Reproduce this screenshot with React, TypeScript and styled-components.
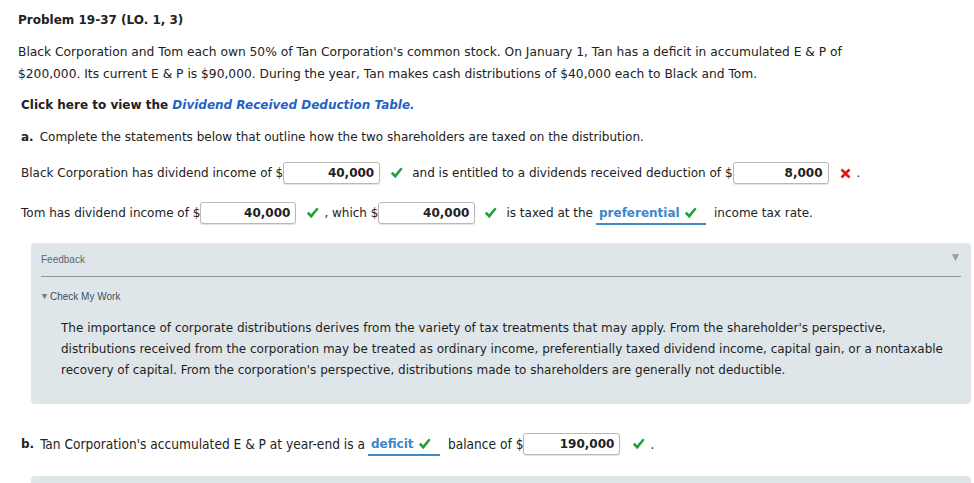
import styled, { createGlobalStyle } from "styled-components";

const GlobalStyle = createGlobalStyle`
  body {
    margin: 0;
    background: #ffffff;
    font-family: "DejaVu Sans", Verdana, sans-serif;
    color: #222222;
  }
`;

const Page = styled.div`
  padding: 11px 3px 0 18px;
  font-size: 12px;
  overflow: hidden;
  height: 483px;
  box-sizing: border-box;
`;

const Title = styled.div`
  font-weight: bold;
  font-size: 12px;
  line-height: 18px;
  margin-bottom: 12px;
`;

const Para = styled.p`
  margin: 0 0 10px 0;
  max-width: 860px;
  font-size: 12.25px;
  line-height: 22px;
`;

const ClickLine = styled.div`
  font-weight: bold;
  padding-left: 3px;
  line-height: 20px;
  margin-bottom: 10px;
`;

const Link = styled.span`
  color: #1f63c6;
  font-style: italic;
`;

const Row = styled.div<{ $mt?: number }>`
  display: flex;
  align-items: center;
  padding-left: 3px;
  height: 24px;
  margin-top: ${(p) => p.$mt ?? 0}px;
  white-space: nowrap;
`;

const Lead = styled.b<{ $gap?: number }>`
  font-family: "DejaVu Sans", Verdana, sans-serif;
  font-size: 12px;
  margin-right: ${(p) => p.$gap ?? 6}px;
`;

const Input = styled.div<{ $w: number }>`
  width: ${(p) => p.$w}px;
  height: 22px;
  box-sizing: border-box;
  border: 1px solid #b9b9b9;
  border-radius: 3px;
  box-shadow: 0 1px 1px rgba(0, 0, 0, 0.12);
  background: #fff;
  font-family: "DejaVu Sans", Verdana, sans-serif;
  font-size: 12px;
  font-weight: bold;
  text-align: right;
  padding-right: 5px;
  line-height: 20px;
`;

const Mark = styled.span<{ $l?: number; $r?: number }>`
  display: inline-flex;
  align-items: center;
  margin-left: ${(p) => p.$l ?? 10}px;
  margin-right: ${(p) => p.$r ?? 8}px;
`;

const Choice = styled.span<{ $w: number }>`
  display: inline-flex;
  align-items: center;
  width: ${(p) => p.$w}px;
  height: 22px;
  box-sizing: border-box;
  border-bottom: 2px solid #3f8ac9;
  color: #3c87c8;
  font-family: "DejaVu Sans", Verdana, sans-serif;
  font-size: 12px;
  font-weight: bold;
  padding-left: 3px;
  margin: 0 8px 0 3px;
  position: relative;
  top: 1px;
`;

const Panel = styled.div`
  margin: 18px 0 0 13px;
  background: #dfe6e9;
  border-radius: 4px;
  padding: 9px 10px 23px 10px;
`;

const PanelHead = styled.div`
  display: flex;
  justify-content: space-between;
  align-items: center;
  font-family: "Liberation Sans", Arial, sans-serif;
  font-size: 10px;
  color: #566a78;
  height: 14px;
  padding-bottom: 10px;
  border-bottom: 1px solid #8d979c;
`;

const Caret = styled.svg<{ $mr?: number; $mt?: number }>`
  flex: none;
  margin-right: ${(p) => p.$mr ?? 0}px;
  margin-top: ${(p) => p.$mt ?? 0}px;
`;

const SubHead = styled.div`
  font-family: "Liberation Sans", Arial, sans-serif;
  font-size: 10px;
  color: #3e4f5a;
  margin-top: 14px;
  display: flex;
  align-items: center;
  gap: 2px;
`;

const FeedbackText = styled.p`
  margin: 16px 0 0 20px;
  line-height: 21px;
  color: #1e1e1e;
`;

const CondensedRow = styled(Row)`
  font-family: "DejaVu Sans Condensed", "Liberation Sans Narrow", "Liberation Sans", sans-serif;
  font-size: 13.6px;
`;

const Bottom = styled.div`
  margin: 20px 0 0 13px;
  background: #dfe6e9;
  border-radius: 4px 4px 0 0;
  height: 20px;
`;

const Check = () => (
  <svg width="13" height="12" viewBox="0 0 13 12">
    <path d="M0.8 6.6 L2.9 4.7 L5 7.2 L10.9 0.6 L12.6 2 L5.3 11.2 Z" fill="#1f9e3a" />
  </svg>
);

const Cross = () => (
  <svg width="11" height="11" viewBox="0 0 11 11">
    <path d="M1.5 1.5 L9.5 9.5 M9.5 1.5 L1.5 9.5" fill="none" stroke="#e4141b" strokeWidth="2.6" />
  </svg>
);

const Tri = ({ size, color, mr, mt }: { size: number; color: string; mr?: number; mt?: number }) => (
  <Caret width={size} height={size} viewBox="0 0 10 10" $mr={mr} $mt={mt}>
    <path d="M1 1.5 H9 L5 9 Z" fill={color} />
  </Caret>
);

export default function App() {
  return (
    <>
      <GlobalStyle />
      <Page>
        <Title>Problem 19-37 (LO. 1, 3)</Title>
        <Para>
          Black Corporation and Tom each own 50% of Tan Corporation's common stock. On January 1, Tan has a deficit in
          accumulated E &amp; P of $200,000. Its current E &amp; P is $90,000. During the year, Tan makes cash
          distributions of $40,000 each to Black and Tom.
        </Para>
        <ClickLine>
          Click here to view the <Link>Dividend Received Deduction Table.</Link>
        </ClickLine>
        <Row>
          <Lead>a.</Lead>Complete the statements below that outline how the two shareholders are taxed on the distribution.
        </Row>
        <Row $mt={12}>
          Black Corporation has dividend income of $
          <Input $w={97}>40,000</Input>
          <Mark $l={10} $r={9}>
            <Check />
          </Mark>
          and is entitled to a dividends received deduction of $
          <Input $w={96}>8,000</Input>
          <Mark $l={11} $r={6}>
            <Cross />
          </Mark>
          .
        </Row>
        <Row $mt={16}>
          Tom has dividend income of $
          <Input $w={96}>40,000</Input>
          <Mark $l={10} $r={5}>
            <Check />
          </Mark>
          , which $
          <Input $w={97}>40,000</Input>
          <Mark $l={9} $r={9}>
            <Check />
          </Mark>
          is taxed at the
          <Choice $w={110}>
            preferential&nbsp;
            <Check />
          </Choice>
          income tax rate.
        </Row>
        <Panel>
          <PanelHead>
            <span>Feedback</span>
            <Tri size={9} color="#9b9b9b" mr={1} mt={-4} />
          </PanelHead>
          <SubHead>
            <Tri size={7} color="#808080" />
            Check My Work
          </SubHead>
          <FeedbackText>
            The importance of corporate distributions derives from the variety of tax treatments that may apply. From
            the shareholder's perspective, distributions received from the corporation may be treated as ordinary
            income, preferentially taxed dividend income, capital gain, or a nontaxable recovery of capital. From the
            corporation's perspective, distributions made to shareholders are generally not deductible.
          </FeedbackText>
        </Panel>
        <CondensedRow $mt={28}>
          <Lead $gap={6}>b.</Lead>Tan Corporation's accumulated E &amp; P at year-end is a
          <Choice $w={72}>
            deficit&nbsp;
            <Check />
          </Choice>
          balance of $
          <Input $w={97}>190,000</Input>
          <Mark $l={12} $r={5}>
            <Check />
          </Mark>
          .
        </CondensedRow>
        <Bottom />
      </Page>
    </>
  );
}
